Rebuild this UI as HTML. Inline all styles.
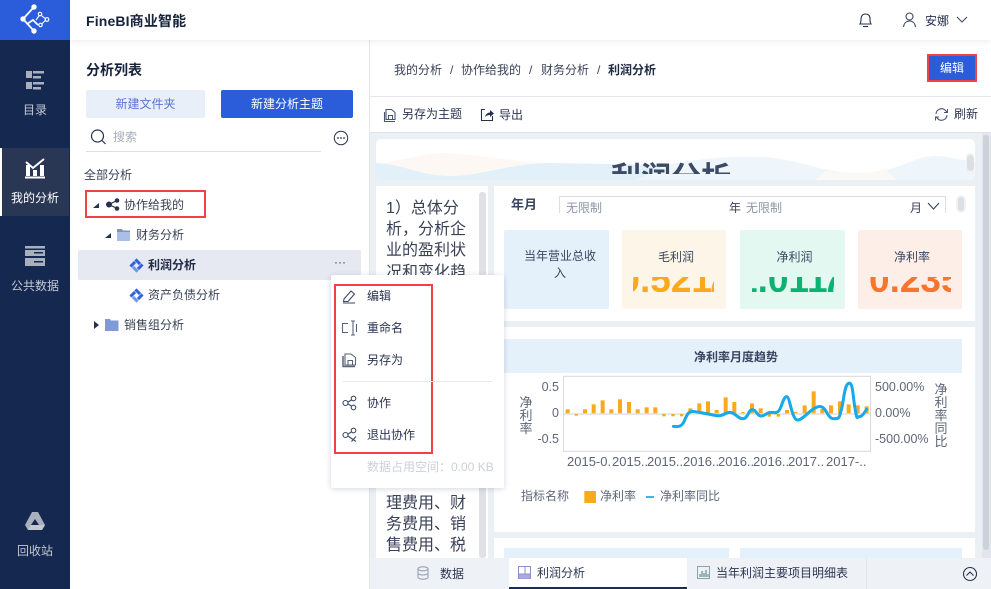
<!DOCTYPE html>
<html lang="zh">
<head>
<meta charset="utf-8">
<style>
html,body{margin:0;padding:0;width:991px;height:589px;overflow:hidden;background:#fff}
body{position:relative;font-family:"Liberation Sans","Noto Sans CJK SC",sans-serif;font-size:12px;color:#1f2a44}
.a{position:absolute}
.t{position:absolute;white-space:nowrap;line-height:20px;height:20px}
.c{text-align:center}
svg{position:absolute;overflow:visible}
.clip{position:absolute;overflow:hidden}
.num{position:absolute;top:-17px;white-space:nowrap;line-height:40px;font-size:37px;font-weight:700;font-family:"Liberation Sans",sans-serif}
</style>
</head>
<body>
<!-- sidebar -->
<div class="a" style="left:0;top:0;width:70px;height:589px;background:#15284f"></div>
<div class="a" style="left:0;top:0;width:70px;height:40px;background:#2b5cd9"></div>
<svg style="left:0;top:0" width="70" height="40" fill="none" stroke="#fff" stroke-width="1.800">
<path d="M34 7L23 19L34 31"/>
<path d="M27 24L33 20L38 25" stroke-width="1.700"/>
<path d="M36 20L40 14.500L46.500 19.500L40.500 25" stroke-width="1.100"/>
<g fill="#fff" stroke="none"><circle cx="34" cy="7" r="2.700"/><circle cx="23" cy="19" r="2.700"/><circle cx="34" cy="31" r="2.700"/></g>
<g fill="#2b5cd9" stroke="#fff" stroke-width="1.200"><circle cx="40" cy="14" r="1.700"/><circle cx="47" cy="19.500" r="1.800"/><circle cx="40.500" cy="25" r="1.700"/></g>
</svg>
<div class="a" style="left:0;top:148px;width:69px;height:68px;background:#293654"></div>
<div class="a" style="left:0;top:148px;width:2px;height:68px;background:#fff"></div>
<svg style="left:0;top:60px" width="70" height="40" fill="#a8afbd">
<rect x="26" y="11" width="6" height="7"/><rect x="26" y="22" width="6" height="7"/>
<rect x="33" y="11" width="11" height="2.500"/><rect x="33" y="16" width="8" height="2.500"/><rect x="33" y="22" width="11" height="2.500"/><rect x="33" y="27" width="8" height="2.500"/>
</svg>
<div class="t c" style="left:0;top:100px;width:70px;color:#c4c9d4">目录</div>
<svg style="left:0;top:150px" width="70" height="40" fill="#fff">
<path d="M26 12l7 6 11-9" fill="none" stroke="#fff" stroke-width="2"/>
<rect x="26" y="15" width="4" height="11"/><rect x="33" y="20" width="4" height="6"/><rect x="40" y="15" width="4" height="11"/><rect x="25" y="26.500" width="20" height="2"/>
</svg>
<div class="t c" style="left:0;top:188px;width:70px;color:#fff">我的分析</div>
<svg style="left:0;top:240px" width="70" height="30">
<rect x="25" y="6" width="20" height="2.500" fill="#a8afbd"/><rect x="25" y="10" width="20" height="6" fill="#a8afbd"/><rect x="25" y="18" width="20" height="8" fill="#a8afbd"/><rect x="34" y="12" width="9" height="1.500" fill="#15284f"/><rect x="34" y="21" width="9" height="1.500" fill="#15284f"/>
</svg>
<div class="t c" style="left:0;top:276px;width:70px;color:#c4c9d4">公共数据</div>
<svg style="left:0;top:505px" width="70" height="30">
<path d="M32 7h6l7 13-3 5H28l-3-5z" fill="#a8afbd"/>
<path d="M35 14l-4 6h8z" fill="#15284f"/>
<path d="M31 20h8l6 0-3 5H28z" fill="#c2c7d1"/>
</svg>
<div class="t c" style="left:0;top:541px;width:70px;color:#c4c9d4">回收站</div>

<!-- header -->
<div class="a" style="left:70px;top:0;width:921px;height:40px;background:#fff;box-shadow:0 2px 6px rgba(40,50,80,.08);z-index:3"></div>
<div class="t" style="left:86px;top:11px;font-size:14px;font-weight:700;color:#16213a;z-index:4;letter-spacing:.15px">FineBI商业智能</div>
<svg style="left:855px;top:10px;z-index:4" width="20" height="20" fill="none" stroke="#26314d" stroke-width="1.100">
<path d="M5 14c1-1.500 1-3 1-5 0-3 1.500-5 4.500-5S15 6 15 9c0 2 0 3.500 1 5z"/><path d="M8 16.500h5"/>
</svg>
<svg style="left:900px;top:10px;z-index:4" width="20" height="20" fill="none" stroke="#3d4a66" stroke-width="1.100">
<circle cx="9.500" cy="6.500" r="3.500"/><path d="M3.500 17c.5-4 3-6 6-6s5.500 2 6 6"/>
</svg>
<div class="t" style="left:925px;top:11px;color:#26314d;z-index:4">安娜</div>
<svg style="left:955px;top:14px;z-index:4" width="14" height="12" fill="none" stroke="#3d4a66" stroke-width="1.100"><path d="M2 3l5 5 5-5"/></svg>

<!-- left panel -->
<div class="t" style="left:86px;top:60px;font-size:14px;font-weight:700;color:#16213a">分析列表</div>
<div class="a" style="left:86px;top:90px;width:119px;height:28px;background:#e9eff9;border-radius:2px;line-height:28px;text-align:center;color:#5a74d8">新建文件夹</div>
<div class="a" style="left:221px;top:90px;width:132px;height:28px;background:#2b5cd9;border-radius:2px;line-height:28px;text-align:center;color:#fff">新建分析主题</div>
<svg style="left:90px;top:128px" width="18" height="18" fill="none" stroke="#27324d" stroke-width="1.200"><circle cx="7.500" cy="8" r="6"/><path d="M12 12.500l3.500 3.500"/></svg>
<div class="t" style="left:113px;top:127px;color:#a8adb8">搜索</div>
<div class="a" style="left:86px;top:151px;width:235px;height:1px;background:#dcdfe5"></div>
<svg style="left:333px;top:130px" width="16" height="16" fill="none" stroke="#27324d"><circle cx="8" cy="8" r="6.700"/><g fill="#27324d" stroke="none"><circle cx="5" cy="8" r=".9"/><circle cx="8" cy="8" r=".9"/><circle cx="11" cy="8" r=".9"/></g></svg>
<div class="t" style="left:84px;top:165px;color:#3a4257">全部分析</div>

<div class="a" style="left:85px;top:190px;width:117px;height:24px;border:2px solid #f04244"></div>
<svg style="left:92px;top:200px" width="10" height="10" fill="#27324d"><path d="M1 8h6V3z"/></svg>
<svg style="left:105px;top:197px" width="15" height="15" fill="#27324d" stroke="#27324d"><path d="M4 7.500l8-4M4 7.500l8 4" fill="none" stroke-width="1.200"/><g stroke="none"><circle cx="4" cy="7.500" r="3"/><circle cx="12" cy="3.500" r="2.300"/><circle cx="12" cy="11.500" r="2.300"/></g></svg>
<div class="t" style="left:124px;top:195px;color:#3a4257">协作给我的</div>

<svg style="left:104px;top:230px" width="10" height="10" fill="#27324d"><path d="M1 8h6V3z"/></svg>
<svg style="left:117px;top:228px" width="14" height="14"><path d="M0 1h5l1 1.500h7V13H0z" fill="#7f94b8"/><rect x="0" y="4" width="13" height="9" fill="#a9bfe6"/></svg>
<div class="t" style="left:136px;top:225px;color:#3a4257">财务分析</div>

<div class="a" style="left:78px;top:250px;width:283px;height:30px;background:#e6e9f1;border-radius:2px"></div>
<svg style="left:129px;top:258px" width="15" height="15"><g transform="rotate(45 7.500 7.500)"><rect x="2.500" y="2.500" width="6.500" height="3" fill="#2f63dd"/><rect x="9.500" y="2.500" width="3" height="6.500" fill="#2f63dd"/><rect x="6" y="9.500" width="6.500" height="3" fill="#6b95ee"/><rect x="2.500" y="6" width="3" height="6.500" fill="#2f63dd"/></g></svg>
<div class="t" style="left:148px;top:255px;font-weight:700;color:#1f2a44">利润分析</div>
<div class="t" style="left:334px;top:252px;color:#3a4257;letter-spacing:0">···</div>

<svg style="left:129px;top:288px" width="15" height="15"><g transform="rotate(45 7.500 7.500)"><rect x="2.500" y="2.500" width="6.500" height="3" fill="#2f63dd"/><rect x="9.500" y="2.500" width="3" height="6.500" fill="#2f63dd"/><rect x="6" y="9.500" width="6.500" height="3" fill="#6b95ee"/><rect x="2.500" y="6" width="3" height="6.500" fill="#2f63dd"/></g></svg>
<div class="t" style="left:148px;top:285px;color:#3a4257">资产负债分析</div>

<svg style="left:92px;top:320px" width="10" height="10" fill="#27324d"><path d="M2 1l5 4-5 4z"/></svg>
<svg style="left:105px;top:318px" width="14" height="14"><path d="M0 1h5l1 1.500h7.500V13H0z" fill="#7f9ad4"/></svg>
<div class="t" style="left:124px;top:315px;color:#3a4257">销售组分析</div>

<!-- right area -->
<div class="a" style="left:369px;top:40px;width:1px;height:549px;background:#e3e6ec"></div>
<div class="t" style="left:394px;top:60px;color:#3a4257">我的分析</div>
<div class="t" style="left:450px;top:60px;color:#3a4257">/</div>
<div class="t" style="left:461px;top:60px;color:#3a4257">协作给我的</div>
<div class="t" style="left:529px;top:60px;color:#3a4257">/</div>
<div class="t" style="left:541px;top:60px;color:#3a4257">财务分析</div>
<div class="t" style="left:597px;top:60px;color:#3a4257">/</div>
<div class="t" style="left:608px;top:60px;font-weight:700;color:#1f2a44">利润分析</div>
<div class="a" style="left:927px;top:54px;width:46px;height:24px;border:2px solid #f04244;background:#2b5cd9;color:#fff;text-align:center;line-height:24px">编辑</div>
<div class="a" style="left:370px;top:96px;width:621px;height:1px;background:#e4e7f0"></div>
<svg style="left:383px;top:107px" width="15" height="15" fill="none" stroke="#4a5670" stroke-width="1.100"><path d="M3 2.500h5.500l3.500 3v7H3zM1.500 5v9.500H12"/><path d="M5.500 12.500V8.500h4v4"/></svg>
<div class="t" style="left:402px;top:104px;color:#2c3650">另存为主题</div>
<svg style="left:480px;top:107px" width="15" height="15" fill="none" stroke="#27324d" stroke-width="1.100"><path d="M5 2.500H1.500v11h11V9"/><path d="M5 10c.5-3 3-4.500 5-4.500V3l4 3.500-4 3.500V8c-2 0-3.500 .5-5 2z" fill="#27324d" stroke="none"/></svg>
<div class="t" style="left:499px;top:105px;color:#2c3650">导出</div>
<svg style="left:934px;top:107px" width="15" height="15" fill="none" stroke="#4a5670" stroke-width="1.100"><path d="M2 7a5.500 5.500 0 0 1 9.500-3.500L13 5M13 8a5.500 5.500 0 0 1-9.500 3.500L2 10"/><path d="M13.500 2v3.500H10M1.500 13.500V10H5" stroke-width="1"/></svg>
<div class="t" style="left:954px;top:104px;color:#2c3650">刷新</div>

<!-- canvas -->
<div class="clip" style="left:370px;top:132px;width:621px;height:426px;background:#ebf0f5;border-top:1px solid #dfe2e8;box-sizing:border-box"></div>
<div class="a" style="left:982px;top:133px;width:9px;height:425px;background:#e2e6ec"></div>
<div class="a" style="left:983px;top:135px;width:6px;height:415px;background:#cbd2da;border-radius:3px"></div>

<!-- title card -->
<div class="clip" style="left:376px;top:139px;width:599px;height:41px;background:#fff;border-radius:5px">
<svg style="left:0;top:0" width="599" height="41" viewBox="0 0 599 41">
<path d="M0 26C30 20 50 14 70 14S130 22 190 26V41H0Z" fill="#fdf8f3"/>
<path d="M0 24C30 26 45 37 75 37S135 24 175 24L290 26V41H0Z" fill="#e1f0f9"/>
<path d="M260 41L290 26C320 20 350 17 385 18S440 32 475 34S525 25 545 19S585 22 599 23V41Z" fill="#eff6fb"/>
<path d="M440 41L450 32C465 34 490 36 510 30L520 41Z" fill="#fbf9f5"/>
</svg>
<div class="clip" style="left:0;top:0;width:599px;height:35px"><div class="t" style="left:235px;top:20px;font-size:30px;font-weight:700;line-height:40px;height:40px;color:#3c4a66">利润分析</div></div>
</div>
<div class="a" style="left:966px;top:153px;width:8px;height:22px;background:#f1f2f4;border-radius:4px"></div>
<div class="a" style="left:966.500px;top:155px;width:7px;height:16px;background:#dcdfe4;border-radius:4px"></div>

<!-- left text panel -->
<div class="clip" style="left:376px;top:186px;width:112px;height:372px;background:#fff">
<div class="a" style="left:103px;top:6px;width:7px;height:366px;background:#dfe1e5;border-radius:3px"></div>
<div class="a" style="left:10px;top:7px;width:84px;font-size:16px;line-height:21.200px;color:#3a4257;padding-top:5px">
<div style="white-space:nowrap">1）总体分</div><div style="white-space:nowrap">析，分析企</div><div style="white-space:nowrap">业的盈利状</div><div style="white-space:nowrap">况和变化趋</div>
</div>
<div class="a" style="left:10px;top:307px;width:84px;font-size:16px;line-height:21.200px;color:#3a4257">
<div style="white-space:nowrap">理费用、财</div><div style="white-space:nowrap">务费用、销</div><div style="white-space:nowrap">售费用、税</div><div style="white-space:nowrap">收等</div>
</div>
</div>

<!-- right panels -->
<div class="a" style="left:494px;top:186px;width:481px;height:135px;background:#fff"></div>
<div class="t" style="left:511px;top:195px;font-size:13px;font-weight:700;color:#3a4560">年月</div>
<div class="clip" style="left:559px;top:196px;width:387px;height:17px;border:1px solid #dcdcea;border-bottom:0;box-sizing:border-box">
<div class="t" style="left:6px;top:1px;color:#8e95a6">无限制</div>
<div class="t" style="left:169px;top:1px;color:#3a4257">年</div>
<div class="t" style="left:186px;top:1px;color:#8e95a6">无限制</div>
<div class="t" style="left:350px;top:1px;color:#3a4257">月</div>
<svg style="left:367px;top:5px" width="14" height="10" fill="none" stroke="#3a4560" stroke-width="1.100"><path d="M1 1l5.500 6L12 1"/></svg>
</div>
<div class="a" style="left:956px;top:195px;width:10px;height:18px;background:#f1f2f4;border-radius:5px"></div>
<div class="a" style="left:958px;top:197px;width:6px;height:14px;background:#dcdfe4;border-radius:3px"></div>

<div class="a c" style="left:504px;top:230px;width:105px;height:79px;background:#e4f1fb;border-radius:2px;color:#3a4560;line-height:17px;box-sizing:border-box;padding:18px 13px 0 20px;font-size:12px">当年营业总收入</div>

<div class="clip" style="left:622px;top:230px;width:104px;height:79px;background:#fdf6e8;border-radius:2px">
<div class="t c" style="left:2px;top:17px;width:104px;color:#3a4560">毛利润</div>
<div class="clip" style="left:11px;top:47px;width:81px;height:15px"><div class="num" style="left:-13.600px;color:#f8a91c">0.521<span style="margin-left:-6px">7</span></div></div>
</div>
<div class="clip" style="left:740px;top:230px;width:105px;height:79px;background:#e3f8f1;border-radius:2px">
<div class="t c" style="left:2px;top:17px;width:105px;color:#3a4560">净利润</div>
<div class="clip" style="left:12px;top:47px;width:82px;height:15px"><div class="num" style="left:-15px;color:#0db272">1.011<span style="margin-left:-5px">7</span></div></div>
</div>
<div class="clip" style="left:858px;top:230px;width:104px;height:79px;background:#fdeee8;border-radius:2px">
<div class="t c" style="left:2px;top:17px;width:104px;color:#3a4560">净利率</div>
<div class="clip" style="left:11px;top:47px;width:82px;height:15px"><div class="num" style="left:0;color:#f7752d">0.235</div></div>
</div>

<!-- chart card -->
<div class="a" style="left:494px;top:327px;width:481px;height:205px;background:#fff"></div>
<div class="a c" style="left:504px;top:339px;width:458px;height:34px;background:#e4f1fb;line-height:36px;font-weight:700;color:#3a4560;box-sizing:border-box;padding-left:6px">净利率月度趋势</div>
<svg style="left:490px;top:330px" width="501" height="259" viewBox="0 0 1503 777">
<rect x="220.500" y="139" width="921" height="225" fill="#fff" stroke="#d8d9dc" stroke-width="3"/>
<rect x="222" y="249" width="918" height="6" fill="#e8e8e8"/>
<g fill="#f8a91c">
<rect x="227" y="238" width="12" height="12"/><rect x="254" y="252" width="10" height="5"/><rect x="279" y="238" width="12" height="12"/><rect x="305" y="223" width="12" height="27"/><rect x="332" y="211" width="12" height="39"/><rect x="358" y="238" width="12" height="12"/><rect x="384" y="208" width="12" height="42"/><rect x="411" y="216" width="12" height="34"/><rect x="437" y="238" width="12" height="12"/><rect x="464" y="232" width="12" height="18"/><rect x="490" y="232" width="12" height="18"/><rect x="517" y="252" width="10" height="7"/><rect x="544" y="252" width="10" height="7"/><rect x="570" y="252" width="10" height="7"/><rect x="595" y="235" width="12" height="15"/><rect x="622" y="220" width="12" height="30"/><rect x="648" y="214" width="12" height="36"/><rect x="674" y="240" width="12" height="10"/><rect x="701" y="202" width="12" height="48"/><rect x="727" y="216" width="12" height="34"/><rect x="754" y="246" width="10" height="4"/><rect x="780" y="220" width="12" height="30"/><rect x="806" y="235" width="12" height="15"/><rect x="833" y="252" width="10" height="8"/><rect x="860" y="252" width="10" height="8"/><rect x="885" y="240" width="12" height="10"/><rect x="912" y="246" width="10" height="4"/><rect x="938" y="226" width="12" height="24"/><rect x="965" y="184" width="12" height="66"/><rect x="991" y="237" width="12" height="13"/><rect x="1017" y="226" width="12" height="24"/><rect x="1044" y="214" width="12" height="36"/><rect x="1070" y="223" width="12" height="27"/><rect x="1097" y="226" width="12" height="24"/><rect x="1124" y="229" width="12" height="21"/>
</g>
<path d="M550 289C565 291 575 290 582 275S592 245 608 244C630 246 660 254 680 257S705 247 720 247 745 268 760 266 775 239 787 239 800 257 812 258 830 247 842 247 858 251 866 243 880 200 890 200 905 268 922 270 960 235 985 230 1010 265 1030 266 1048 262 1055 235 1063 165 1076 160 1088 195 1095 235 1100 260 1108 260 1120 252 1130 238" fill="none" stroke="#16a9ec" stroke-width="9" stroke-linejoin="round" stroke-linecap="round"/>
<rect x="283" y="483" width="35" height="36" fill="#f8a91c"/>
<rect x="468" y="498" width="24" height="6" fill="#3db5f0"/>
</svg>
<div class="t" style="left:520px;top:377px;width:39px;text-align:right;color:#5e6678;font-size:12.500px">0.5</div>
<div class="t" style="left:520px;top:403px;width:39px;text-align:right;color:#5e6678;font-size:12.500px">0</div>
<div class="t" style="left:520px;top:429px;width:39px;text-align:right;color:#5e6678;font-size:12.500px">-0.5</div>
<div class="t" style="left:875px;top:377px;color:#5e6678;font-size:12.500px">500.00%</div>
<div class="t" style="left:875px;top:403px;color:#5e6678;font-size:12.500px">0.00%</div>
<div class="t" style="left:875px;top:429px;color:#5e6678;font-size:12.500px">-500.00%</div>
<div class="a c" style="left:517px;top:396px;width:18px;line-height:13px;font-size:13px;color:#5e6678">净<br>利<br>率</div>
<div class="a c" style="left:932px;top:383px;width:18px;line-height:13px;font-size:13px;color:#5e6678">净<br>利<br>率<br>同<br>比</div>
<div class="t" style="left:567px;top:452px;color:#5e6678;font-size:13px">2015-0.</div>
<div class="t" style="left:612px;top:452px;color:#5e6678;font-size:13px">2015..</div>
<div class="t" style="left:647px;top:452px;color:#5e6678;font-size:13px">2015..</div>
<div class="t" style="left:683px;top:452px;color:#5e6678;font-size:13px">2016..</div>
<div class="t" style="left:718px;top:452px;color:#5e6678;font-size:13px">2016..</div>
<div class="t" style="left:753px;top:452px;color:#5e6678;font-size:13px">2016..</div>
<div class="t" style="left:788px;top:452px;color:#5e6678;font-size:13px">2017..</div>
<div class="t" style="left:826px;top:452px;color:#5e6678;font-size:13px">2017-..</div>
<div class="t" style="left:521px;top:486px;color:#5e6678">指标名称</div>
<div class="t" style="left:600px;top:486px;color:#5e6678">净利率</div>
<div class="t" style="left:660px;top:486px;color:#5e6678">净利率同比</div>

<div class="a" style="left:494px;top:538px;width:481px;height:20px;background:#fff"></div>
<div class="a" style="left:504px;top:548px;width:225px;height:10px;background:#e4f1fb"></div>
<div class="a" style="left:740px;top:548px;width:222px;height:10px;background:#e4f1fb"></div>

<!-- tabs -->
<div class="a" style="left:370px;top:558px;width:621px;height:31px;background:#eef1f6"></div>
<svg style="left:416px;top:566px" width="14" height="14" fill="none" stroke="#9ba3b2" stroke-width="1.100"><ellipse cx="7" cy="2.800" rx="5" ry="2"/><path d="M2 2.800v8.400c0 1.100 2.200 2 5 2s5-.9 5-2V2.800M2 7c0 1.100 2.200 2 5 2s5-.9 5-2"/></svg>
<div class="t" style="left:440px;top:564px;color:#2c3650">数据</div>
<div class="a" style="left:509px;top:558px;width:178px;height:29px;background:#fff"></div>
<div class="a" style="left:509px;top:587px;width:178px;height:2px;background:#1d2d50"></div>
<svg style="left:518px;top:566px" width="14" height="14" fill="none" stroke="#8a8fd0" stroke-width="1"><rect x=".5" y=".5" width="12" height="12"/><path d="M7 .5v12M.5 8h12M4 8v4.500M10 8v4.500"/><rect x="1" y="8.500" width="11" height="4" fill="#a9abe0" stroke="none"/></svg>
<div class="t" style="left:537px;top:563px;color:#2c3650">利润分析</div>
<svg style="left:697px;top:566px" width="14" height="14" fill="none"><rect x=".5" y=".5" width="12" height="12" stroke="#8aa5a8"/><path d="M3 11V8M5 11V5M7 11V7M9 11V4M11 11V8" stroke="#5f8f95" stroke-width="1.200"/></svg>
<div class="t" style="left:716px;top:563px;color:#2c3650">当年利润主要项目明细表</div>
<div class="a" style="left:866px;top:558px;width:1px;height:31px;background:#e3e6ec"></div>
<svg style="left:962px;top:566px" width="16" height="16" fill="none" stroke="#27324d" stroke-width="1.100"><circle cx="8" cy="8" r="6.500"/><path d="M4.500 9.500L8 6l3.500 3.500"/></svg>

<!-- popup -->
<div class="a" style="left:331px;top:275px;width:173px;height:213px;background:#fff;border-radius:2px;box-shadow:0 1px 6px rgba(40,50,80,.2);z-index:5"></div>
<div style="position:absolute;left:0;top:0;z-index:6">
<div class="a" style="left:334px;top:284px;width:95px;height:166px;border:2px solid #f04244"></div>
<svg style="left:342px;top:288px" width="16" height="16" fill="none" stroke="#3d4a66" stroke-width="1.100"><path d="M2 11l7-8 3.500 3-6.500 7.500H1.500zM1 15h12"/></svg>
<div class="t" style="left:367px;top:286px;color:#2c3650">编辑</div>
<svg style="left:342px;top:320px" width="16" height="16" fill="none" stroke="#5a6479" stroke-width="1.100"><path d="M6 3.500H.5v9H6M11 1v14M9 1h4M9 15h4M14 4.500h.5v7H14"/></svg>
<div class="t" style="left:367px;top:318px;color:#2c3650">重命名</div>
<svg style="left:342px;top:352px" width="16" height="16" fill="none" stroke="#5a6479" stroke-width="1.100"><path d="M3 2h6l4.500 3.500V13H3z"/><path d="M1 4v10.500h12" stroke-width="1.500"/><path d="M6 13V8.500h4.500V13"/></svg>
<div class="t" style="left:367px;top:350px;color:#2c3650">另存为</div>
<div class="a" style="left:343px;top:381px;width:149px;height:1px;background:#e6e8ee"></div>
<svg style="left:342px;top:395px" width="16" height="16" fill="none" stroke="#3d4a66" stroke-width="1.100"><circle cx="3.500" cy="8" r="2.500"/><circle cx="11.500" cy="3.500" r="2.300"/><circle cx="11.500" cy="12.500" r="2.300"/><path d="M6 7l3.500-2M6 9l3.500 2"/></svg>
<div class="t" style="left:367px;top:393px;color:#2c3650">协作</div>
<svg style="left:342px;top:427px" width="16" height="16" fill="none" stroke="#3d4a66" stroke-width="1.100"><circle cx="3.500" cy="8" r="2.500"/><circle cx="11.500" cy="3.500" r="2.300"/><path d="M6 7l3.500-2M6 9l8 5.500M9.500 14.500l4.500-5"/></svg>
<div class="t" style="left:367px;top:425px;color:#2c3650">退出协作</div>
<div class="t" style="left:367px;top:457px;color:#ccd0d8">数据占用空间：0.00 KB</div>
</div>
</body>
</html>
